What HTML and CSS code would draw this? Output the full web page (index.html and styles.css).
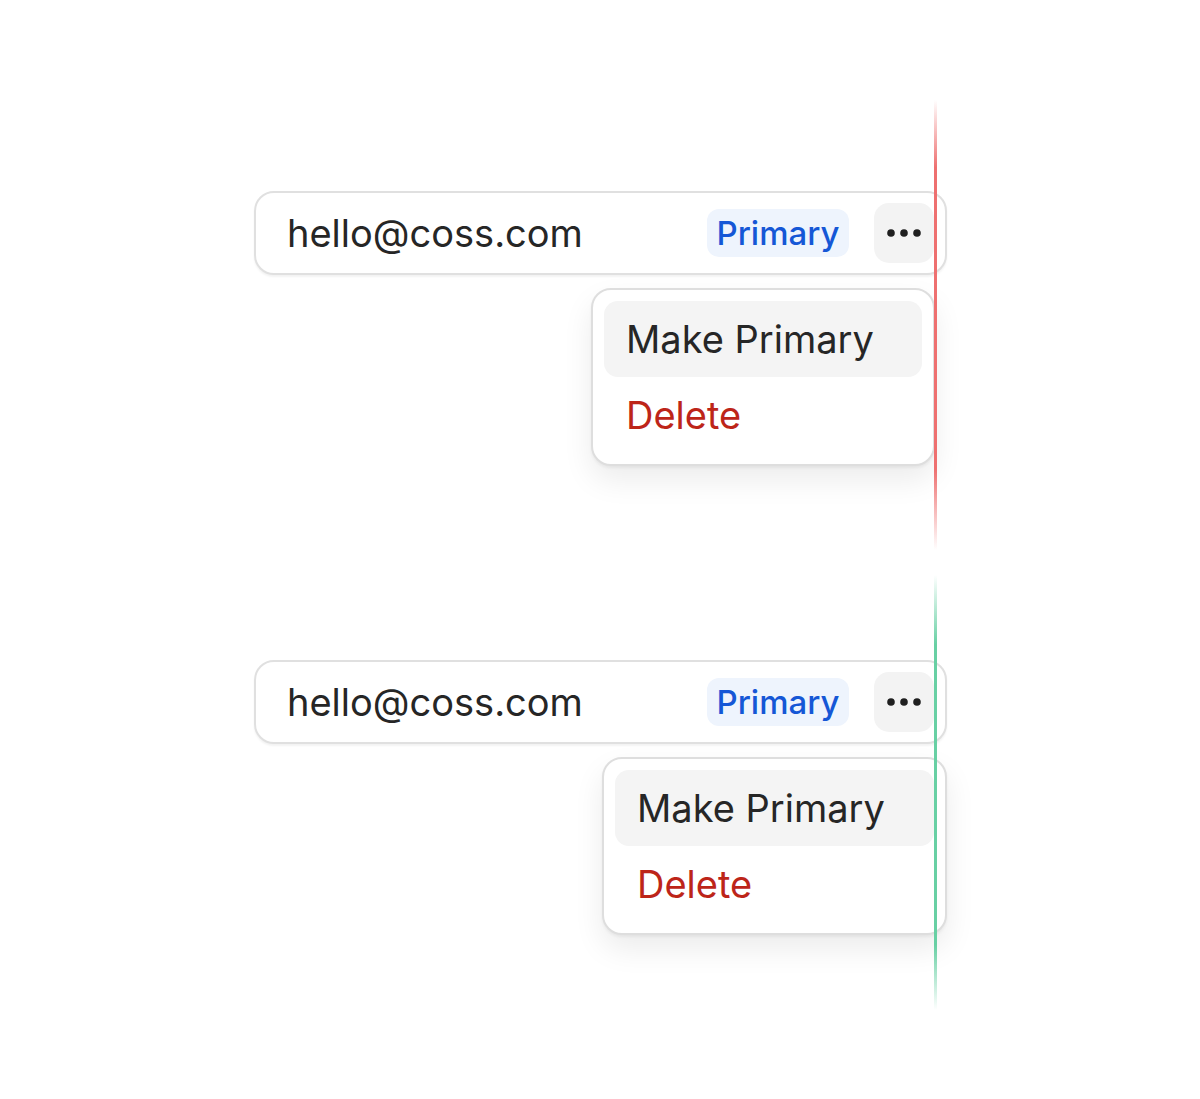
FILE: index.html
```html
<!DOCTYPE html>
<html lang="en">
<head>
<meta charset="utf-8">
<title>Email menu</title>
<link rel="stylesheet" href="styles.css">
</head>
<body>
<main class="page">
  <section class="scene">
    <div class="guide guide-red"></div>
    <div class="card">
      <span class="email">hello@coss.com</span>
      <span class="badge">Primary</span>
      <button class="more" aria-label="More">
        <svg width="34" height="8" viewBox="0 0 34 8"><circle cx="4" cy="4" r="3.8"/><circle cx="17" cy="4" r="3.8"/><circle cx="30" cy="4" r="3.8"/></svg>
      </button>
    </div>
    <div class="menu menu-inset">
      <div class="item item-active">Make Primary</div>
      <div class="item item-danger">Delete</div>
    </div>
  </section>
  <section class="scene">
    <div class="guide guide-green"></div>
    <div class="card">
      <span class="email">hello@coss.com</span>
      <span class="badge">Primary</span>
      <button class="more" aria-label="More">
        <svg width="34" height="8" viewBox="0 0 34 8"><circle cx="4" cy="4" r="3.8"/><circle cx="17" cy="4" r="3.8"/><circle cx="30" cy="4" r="3.8"/></svg>
      </button>
    </div>
    <div class="menu menu-flush">
      <div class="item item-active">Make Primary</div>
      <div class="item item-danger">Delete</div>
    </div>
  </section>
</main>
</body>
</html>
```
FILE: styles.css
```css
* { box-sizing: border-box; }
html, body { margin: 0; padding: 0; background: #ffffff; }
body { font-family: Inter, "Noto Sans", sans-serif; color: #262626; }

.page {
  min-height: 1099px;
  padding: 191px 0 0 254px;
  display: flex;
  flex-direction: column;
  gap: 194px;
}

.scene {
  position: relative;
  width: 693px;
  display: flex;
  flex-direction: column;
  gap: 13px;
}

.card {
  height: 84px;
  border: 2px solid #e0e0e0;
  border-radius: 20px;
  background: #fff;
  box-shadow: 0 2px 2px rgba(0,0,0,0.05);
  display: flex;
  align-items: center;
  padding: 0 11px 0 31px;
}

.email {
  font-size: 38px;
  flex: 1;
  color: #262626;
}

.badge {
  width: 142px;
  height: 48px;
  border-radius: 12px;
  background: #eef4fd;
  color: #1557d6;
  font-size: 33px;
  font-weight: 500;
  display: flex;
  align-items: center;
  justify-content: center;
  margin-right: 25px;
}

.more {
  width: 60px;
  height: 60px;
  border: 0;
  border-radius: 15px;
  background: #f3f3f3;
  display: flex;
  align-items: center;
  justify-content: center;
  padding: 0;
  fill: #1f1f1f;
}

.menu {
  width: 344px;
  align-self: flex-end;
  background: #fff;
  border: 2px solid #dedede;
  border-radius: 20px;
  padding: 11px;
  box-shadow: 0 14px 30px rgba(0,0,0,0.08), 0 2px 3px rgba(0,0,0,0.05);
  display: flex;
  flex-direction: column;
}
.menu-inset { margin-right: 12px; }
.menu-flush { width: 345px; }

.item {
  height: 76px;
  border-radius: 14px;
  padding-left: 22px;
  display: flex;
  align-items: center;
  font-size: 38px;
  color: #262626;
}
.item-active { background: #f4f4f4; }
.item-danger { color: #bd2519; }

.guide {
  position: absolute;
  left: 680px;
  width: 3px;
  z-index: 2;
  pointer-events: none;
}
.guide-red {
  top: -91px;
  height: 450px;
  background: linear-gradient(to bottom, rgba(238,112,112,0) 0%, rgba(238,112,112,1) 15%, rgba(238,112,112,1) 82%, rgba(238,112,112,0) 100%);
}
.guide-green {
  top: -85px;
  height: 435px;
  background: linear-gradient(to bottom, rgba(104,208,164,0) 0%, rgba(104,208,164,1) 16%, rgba(104,208,164,1) 85%, rgba(104,208,164,0) 100%);
}
```
